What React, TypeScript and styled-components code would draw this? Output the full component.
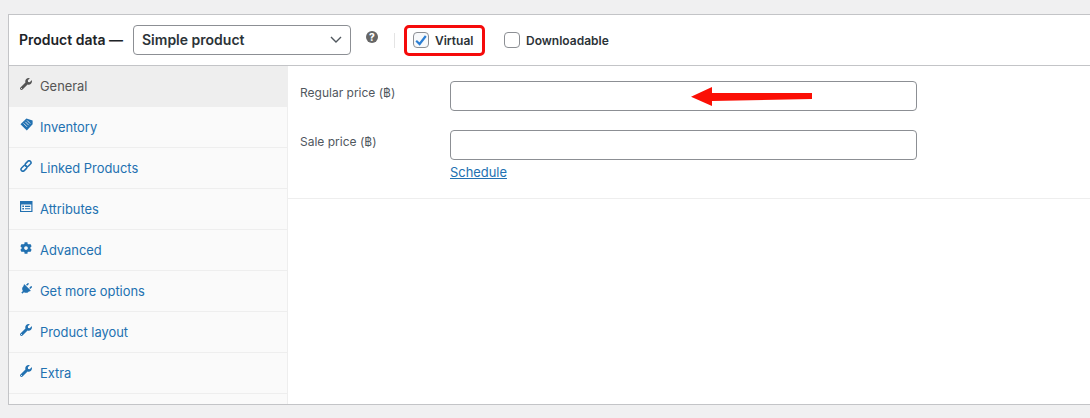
import { ReactNode } from "react";
import styled, { createGlobalStyle } from "styled-components";
import { FaCog, FaPlug, FaWrench } from "react-icons/fa";

const GlobalStyle = createGlobalStyle`
  html, body {
    margin: 0;
    height: 100%;
    background: #f0f0f1;
    overflow: hidden;
  }
  body {
    font-family: Inter, "Liberation Sans", "DejaVu Sans", sans-serif;
    color: #3c434a;
  }
`;

const TagIcon = () => (
  <svg width="13" height="13" viewBox="0 0 13 13" fill="currentColor">
    <path d="M0.5 6.2 L6.4 0.4 L12.6 2.6 L12.6 6.2 L6.8 12.4 Z" />
    <path d="M3.6 5.4 L7 8.8 M5.3 3.8 L8.7 7.2 M7 2.4 L10.2 5.6" stroke="#fafafa" strokeWidth="0.8" />
  </svg>
);

const LinkIcon = () => (
  <svg width="12" height="12" viewBox="0 0 12 12" fill="none" stroke="currentColor" strokeWidth="1.5">
    <rect x="0.6" y="6.4" width="6.6" height="3.8" rx="1.9" transform="rotate(-45 3.9 8.3)" />
    <rect x="4.8" y="1.8" width="6.6" height="3.8" rx="1.9" transform="rotate(-45 8.1 3.7)" />
  </svg>
);

const CardIcon = () => (
  <svg width="13" height="12" viewBox="0 0 13 12" fill="currentColor">
    <path
      fillRule="evenodd"
      d="M0 0 H12.5 V11 H0 Z M1.2 3.4 V9.9 H11.3 V3.4 Z M2.3 4.6 H4 V6 H2.3 Z M5 4.8 H10.2 V5.9 H5 Z M2.3 7 H4 V8.4 H2.3 Z M5 7.2 H10.2 V8.3 H5 Z"
    />
  </svg>
);

const PlugIcon = styled(FaPlug)`
  transform: rotate(45deg);
`;

const tabs: { label: string; icon: ReactNode; active?: boolean }[] = [
  { label: "General", icon: <FaWrench />, active: true },
  { label: "Inventory", icon: <TagIcon /> },
  { label: "Linked Products", icon: <LinkIcon /> },
  { label: "Attributes", icon: <CardIcon /> },
  { label: "Advanced", icon: <FaCog /> },
  { label: "Get more options", icon: <PlugIcon /> },
  { label: "Product layout", icon: <FaWrench /> },
  { label: "Extra", icon: <FaWrench /> },
];

export default function App() {
  return (
    <>
      <GlobalStyle />
      <Panel>
        <Header>
          <Title>Product data —</Title>
          <TypeSelect>
            Simple product
            <svg width="12" height="7" viewBox="0 0 12 7" fill="none" stroke="#50575e" strokeWidth="1.4">
              <path d="M1 1 L6 6 L11 1" />
            </svg>
          </TypeSelect>
          <Help>?</Help>
          <Separator />
          <Option $highlight>
            <Check $checked>
              <svg width="12" height="11" viewBox="0 0 12 11" fill="none" stroke="#2b7fd4" strokeWidth="2.2">
                <path d="M1.2 5.8 L4.6 9 L10.8 1" />
              </svg>
            </Check>
            Virtual
          </Option>
          <Option>
            <Check />
            Downloadable
          </Option>
        </Header>
        <Body>
          <Sidebar>
            {tabs.map((tab) => (
              <Tab key={tab.label} $active={tab.active}>
                <TabIcon>{tab.icon}</TabIcon>
                {tab.label}
              </Tab>
            ))}
          </Sidebar>
          <Main>
            <Fields>
              <Field>
                <Label>Regular price (฿)</Label>
                <FieldControl>
                  <PriceInput />
                  <Arrow width="122" height="20" viewBox="0 0 122 20">
                    <path d="M0 10.7 L21 1 L21 7 L121 7 L121 13 L21 15 L21 20 Z" fill="#fb0f05" />
                  </Arrow>
                </FieldControl>
              </Field>
              <Field>
                <Label>Sale price (฿)</Label>
                <FieldControl>
                  <PriceInput />
                  <ScheduleLink href="#">Schedule</ScheduleLink>
                </FieldControl>
              </Field>
            </Fields>
          </Main>
        </Body>
      </Panel>
    </>
  );
}

const Panel = styled.div`
  box-sizing: border-box;
  margin: 14px 0 0 8px;
  width: 1082px;
  height: 391px;
  display: flex;
  flex-direction: column;
  background: #fff;
  border: 1px solid #c3c4c7;
  border-right: none;
`;

const Header = styled.div`
  box-sizing: border-box;
  height: 51px;
  flex-shrink: 0;
  display: flex;
  align-items: center;
  padding: 0 0 0 10px;
  border-bottom: 1px solid #c3c4c7;
`;

const Title = styled.div`
  width: 114px;
  font-size: 14px;
  font-weight: 600;
  color: #1d2327;
  white-space: nowrap;
  margin-top: -1px;
`;

const TypeSelect = styled.div`
  box-sizing: border-box;
  width: 218px;
  height: 30px;
  display: flex;
  align-items: center;
  justify-content: space-between;
  padding: 0 8px 1px;
  border: 1px solid #8c8f94;
  border-radius: 4px;
  font-size: 14px;
  font-weight: 600;
  color: #2c3338;
`;

const Help = styled.div`
  width: 12px;
  height: 12px;
  margin: -7px 0 0 15px;
  border-radius: 50%;
  background: #666;
  color: #fff;
  font-size: 10px;
  font-weight: 800;
  line-height: 12px;
  text-align: center;
`;

const Separator = styled.div`
  width: 1px;
  height: 15px;
  margin-left: 16px;
  background: #e4e4e4;
`;

const Option = styled.label<{ $highlight?: boolean }>`
  box-sizing: border-box;
  height: 31px;
  display: flex;
  align-items: center;
  gap: 6px;
  font-size: 12px;
  font-weight: 600;
  color: #2c3338;
  ${({ $highlight }) =>
    $highlight
      ? `
    width: 81px;
    margin-left: 9px;
    padding-left: 6px;
    border: 3px solid #f50a0a;
    border-radius: 5px;
    `
      : `
    margin-left: 19px;
    `}
`;

const Check = styled.span<{ $checked?: boolean }>`
  box-sizing: border-box;
  width: 16px;
  height: 16px;
  display: flex;
  align-items: center;
  justify-content: center;
  border: 1px solid #8c8f94;
  border-radius: 4px;
  background: ${({ $checked }) => ($checked ? "#f7f9fb" : "#fff")};
`;

const Body = styled.div`
  flex: 1;
  display: flex;
  min-height: 0;
`;

const Sidebar = styled.div`
  box-sizing: border-box;
  width: 279px;
  flex-shrink: 0;
  background: #fafafa;
  border-right: 1px solid #eee;
`;

const Tab = styled.div<{ $active?: boolean }>`
  box-sizing: border-box;
  height: 41px;
  display: flex;
  align-items: center;
  padding: 1px 0 0 11px;
  border-bottom: 1px solid #eee;
  background: ${({ $active }) => ($active ? "#eee" : "transparent")};
  color: ${({ $active }) => ($active ? "#555" : "#2271b1")};
  font-size: 12.9px;
`;

const TabIcon = styled.span`
  width: 20px;
  height: 14px;
  display: flex;
  align-items: center;
  margin-top: -6px;
  font-size: 12px;
`;

const Main = styled.div`
  flex: 1;
  min-width: 0;
`;

const Fields = styled.div`
  box-sizing: border-box;
  height: 133px;
  padding: 15px 0 0 12px;
  display: flex;
  flex-direction: column;
  gap: 19px;
  border-bottom: 1px solid #eee;
`;

const Field = styled.div`
  display: flex;
`;

const Label = styled.div`
  width: 150px;
  flex-shrink: 0;
  font-size: 12px;
  line-height: 24px;
  color: #50575e;
`;

const FieldControl = styled.div`
  position: relative;
  display: flex;
  flex-direction: column;
  align-items: flex-start;
`;

const PriceInput = styled.div`
  box-sizing: border-box;
  width: 467px;
  height: 30px;
  background: #fff;
  border: 1px solid #8c8f94;
  border-radius: 4px;
`;

const Arrow = styled.svg`
  position: absolute;
  left: 241px;
  top: 5px;
`;

const ScheduleLink = styled.a`
  margin-top: 4px;
  font-size: 12.9px;
  line-height: 17px;
  color: #2271b1;
`;
